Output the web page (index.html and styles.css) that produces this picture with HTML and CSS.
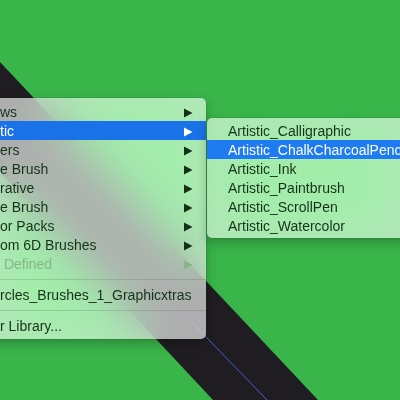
FILE: index.html
```html
<!DOCTYPE html>
<html>
<head>
<meta charset="utf-8">
<link rel="stylesheet" href="styles.css">
</head>
<body>
<div class="scene">
  <svg class="art" width="400" height="400" viewBox="0 0 400 400">
    <polygon points="0,62 318,400 213,400 0,172" fill="#1f1d21"/>
    <line x1="180" y1="310" x2="267" y2="400" stroke="#3d62d8" stroke-width="1"/>
  </svg>

  <div class="menu main">
    <div class="item"><span class="label">ws</span><svg class="arrow" width="9" height="10" viewBox="0 0 9 10"><polygon points="0,0.5 8.5,5 0,9.5"/></svg></div>
    <div class="item active"><span class="label">tic</span><svg class="arrow" width="9" height="10" viewBox="0 0 9 10"><polygon points="0,0.5 8.5,5 0,9.5"/></svg></div>
    <div class="item"><span class="label">ers</span><svg class="arrow" width="9" height="10" viewBox="0 0 9 10"><polygon points="0,0.5 8.5,5 0,9.5"/></svg></div>
    <div class="item"><span class="label">e Brush</span><svg class="arrow" width="9" height="10" viewBox="0 0 9 10"><polygon points="0,0.5 8.5,5 0,9.5"/></svg></div>
    <div class="item"><span class="label">rative</span><svg class="arrow" width="9" height="10" viewBox="0 0 9 10"><polygon points="0,0.5 8.5,5 0,9.5"/></svg></div>
    <div class="item"><span class="label">e Brush</span><svg class="arrow" width="9" height="10" viewBox="0 0 9 10"><polygon points="0,0.5 8.5,5 0,9.5"/></svg></div>
    <div class="item"><span class="label">or Packs</span><svg class="arrow" width="9" height="10" viewBox="0 0 9 10"><polygon points="0,0.5 8.5,5 0,9.5"/></svg></div>
    <div class="item"><span class="label">om 6D Brushes</span><svg class="arrow" width="9" height="10" viewBox="0 0 9 10"><polygon points="0,0.5 8.5,5 0,9.5"/></svg></div>
    <div class="item disabled"><span class="label"> Defined</span><svg class="arrow" width="9" height="10" viewBox="0 0 9 10"><polygon points="0,0.5 8.5,5 0,9.5"/></svg></div>
    <div class="sep"></div>
    <div class="item"><span class="label">rcles_Brushes_1_Graphicxtras</span></div>
    <div class="sep"></div>
    <div class="item"><span class="label">r Library...</span></div>
  </div>

  <div class="menu submenu">
    <div class="item"><span class="label">Artistic_Calligraphic</span></div>
    <div class="item active"><span class="label">Artistic_ChalkCharcoalPencil</span></div>
    <div class="item"><span class="label">Artistic_Ink</span></div>
    <div class="item"><span class="label">Artistic_Paintbrush</span></div>
    <div class="item"><span class="label">Artistic_ScrollPen</span></div>
    <div class="item"><span class="label">Artistic_Watercolor</span></div>
  </div>
</div>
</body>
</html>
```

FILE: styles.css
```css
html, body {
  margin: 0;
  padding: 0;
}
body {
  width: 400px;
  height: 400px;
  overflow: hidden;
  background: #39b54a;
  font-family: "Liberation Sans", Arial, sans-serif;
  font-size: 14px;
}
.scene {
  position: relative;
  width: 400px;
  height: 400px;
  overflow: hidden;
}
.art {
  position: absolute;
  left: 0;
  top: 0;
  display: block;
}
.menu {
  position: absolute;
  display: flex;
  flex-direction: column;
  background: rgba(255, 255, 255, 0.64);
  -webkit-backdrop-filter: blur(24px) saturate(170%);
  backdrop-filter: blur(24px) saturate(170%);
  border-radius: 5px;
  box-shadow: 0 0 0 0.5px rgba(0, 0, 0, 0.14), 0 5px 12px rgba(0, 0, 0, 0.24);
  color: #16331a;
}
.main {
  left: -60px;
  top: 98px;
  width: 266px;
  padding: 4px 0 4px 0;
}
.submenu {
  left: 207px;
  top: 118px;
  width: 240px;
  padding: 3px 0 3px 0;
}
.item {
  box-sizing: border-box;
  height: 19px;
  padding-top: 2px;
  line-height: 17px;
  display: flex;
  align-items: center;
  justify-content: space-between;
  white-space: pre;
}
.main .item {
  padding-left: 60px;
  padding-right: 13px;
}
.submenu .item {
  padding-left: 21px;
  padding-right: 0;
}
.arrow {
  display: block;
  fill: #143016;
}
.item.active {
  background: #1a72e8;
  color: #ffffff;
}
.submenu .item.active {
  background: #1e7bf1;
}
.item.active .arrow {
  fill: #ffffff;
}
.item.disabled {
  color: #86b689;
}
.item.disabled .arrow {
  fill: #86b689;
}
.sep {
  height: 12px;
  display: flex;
  align-items: center;
}
.sep::before {
  content: "";
  display: block;
  width: 100%;
  height: 1px;
  background: rgba(60, 90, 60, 0.2);
}
```
